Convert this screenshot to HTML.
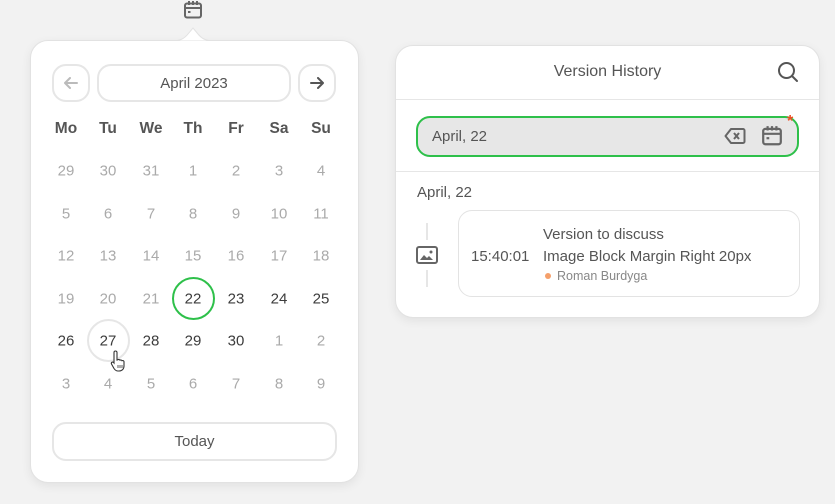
<!DOCTYPE html>
<html><head><meta charset="utf-8"><style>
*{box-sizing:border-box;margin:0;padding:0}
body{width:835px;height:503px;background:#f2f2f2;font-family:"Liberation Sans",sans-serif;color:#444;position:relative;overflow:hidden}
.a{position:absolute}
.panel{background:#fff;border:1px solid #e2e2e2;border-radius:18px;box-shadow:0 3px 10px rgba(0,0,0,.07)}
.btn{background:#fff;border:2px solid #e6e6e6;border-radius:14px;display:flex;align-items:center;justify-content:center;font-size:15px;color:#555}
.c{position:absolute;width:40px;margin-left:-20px;text-align:center;font-size:15px;transform:translateY(-50%);color:#3c3c3c}
.h{font-weight:bold;color:#555;font-size:15.5px}
.g{color:#aaa}
</style></head><body>
<svg class="a" style="left:183px;top:0" width="20" height="20" viewBox="0 0 20 20" fill="none" stroke="#666" stroke-width="2"><rect x="2" y="3.5" width="16" height="14" rx="2"/><path d="M2 8h16M6 1v4M10 1v4M14 1v4"/><rect x="5" y="11" width="2.5" height="2" fill="#666" stroke="none"/></svg>
<div class="a panel" style="left:30px;top:40px;width:329px;height:443px"></div>
<svg class="a" style="left:170px;top:24px" width="46" height="18"><path d="M0 17 C10 17 14 15 18 10 L23 4 L28 10 C32 15 36 17 46 17 Z" fill="#fff" stroke="#e2e2e2"/><rect x="0" y="17" width="46" height="2" fill="#fff"/></svg>
<div class="a btn" style="left:52px;top:64px;width:38px;height:38px"><svg width="14" height="12" viewBox="0 0 14 12" fill="none" stroke="#bbb" stroke-width="2" stroke-linecap="round" stroke-linejoin="round"><path d="M13 6H1M6 1L1 6l5 5"/></svg></div>
<div class="a btn" style="left:97px;top:64px;width:194px;height:38px">April 2023</div>
<div class="a btn" style="left:298px;top:64px;width:38px;height:38px"><svg width="14" height="12" viewBox="0 0 14 12" fill="none" stroke="#555" stroke-width="2" stroke-linecap="round" stroke-linejoin="round"><path d="M1 6h12M8 1l5 5-5 5"/></svg></div>
<div class="a" style="left:0;top:1px;width:835px;height:503px">
<div class="c h" style="left:66px;top:128px">Mo</div><div class="c h" style="left:108px;top:128px">Tu</div><div class="c h" style="left:151px;top:128px">We</div><div class="c h" style="left:193px;top:128px">Th</div><div class="c h" style="left:236px;top:128px">Fr</div><div class="c h" style="left:279px;top:128px">Sa</div><div class="c h" style="left:321px;top:128px">Su</div>
<div class="c g" style="left:66px;top:170px">29</div><div class="c g" style="left:108px;top:170px">30</div><div class="c g" style="left:151px;top:170px">31</div><div class="c g" style="left:193px;top:170px">1</div><div class="c g" style="left:236px;top:170px">2</div><div class="c g" style="left:279px;top:170px">3</div><div class="c g" style="left:321px;top:170px">4</div>
<div class="c g" style="left:66px;top:213px">5</div><div class="c g" style="left:108px;top:213px">6</div><div class="c g" style="left:151px;top:213px">7</div><div class="c g" style="left:193px;top:213px">8</div><div class="c g" style="left:236px;top:213px">9</div><div class="c g" style="left:279px;top:213px">10</div><div class="c g" style="left:321px;top:213px">11</div>
<div class="c g" style="left:66px;top:255px">12</div><div class="c g" style="left:108px;top:255px">13</div><div class="c g" style="left:151px;top:255px">14</div><div class="c g" style="left:193px;top:255px">15</div><div class="c g" style="left:236px;top:255px">16</div><div class="c g" style="left:279px;top:255px">17</div><div class="c g" style="left:321px;top:255px">18</div>
<div class="a" style="left:172px;top:276px;width:43px;height:43px;border:2px solid #2ec04a;border-radius:50%"></div>
<div class="c g" style="left:66px;top:298px">19</div><div class="c g" style="left:108px;top:298px">20</div><div class="c g" style="left:151px;top:298px">21</div><div class="c" style="left:193px;top:298px">22</div><div class="c" style="left:236px;top:298px">23</div><div class="c" style="left:279px;top:298px">24</div><div class="c" style="left:321px;top:298px">25</div>
<div class="a" style="left:87px;top:318px;width:43px;height:43px;border:2px solid #e6e6e6;border-radius:50%"></div>
<div class="c" style="left:66px;top:340px">26</div><div class="c" style="left:108px;top:340px">27</div><div class="c" style="left:151px;top:340px">28</div><div class="c" style="left:193px;top:340px">29</div><div class="c" style="left:236px;top:340px">30</div><div class="c g" style="left:279px;top:340px">1</div><div class="c g" style="left:321px;top:340px">2</div>
<div class="c g" style="left:66px;top:383px">3</div><div class="c g" style="left:108px;top:383px">4</div><div class="c g" style="left:151px;top:383px">5</div><div class="c g" style="left:193px;top:383px">6</div><div class="c g" style="left:236px;top:383px">7</div><div class="c g" style="left:279px;top:383px">8</div><div class="c g" style="left:321px;top:383px">9</div>
</div>
<svg class="a" style="left:110px;top:350px" width="18" height="22" viewBox="0 0 18 22"><path d="M4 2.5a1.5 1.5 0 0 1 3 0V10l1-.3a1.4 1.4 0 0 1 2 .5 1.4 1.4 0 0 1 2 .5 1.4 1.4 0 0 1 2 .8V16c0 3-2 5-5 5H8c-2 0-3-1-4-2.5L1.5 14a1.3 1.3 0 0 1 2-1.6L4 13Z" fill="#fff" stroke="#333" stroke-width="1.1"/><path d="M8 15v3M10 15v3M12 15v3" stroke="#333" stroke-width=".8"/></svg>
<div class="a btn" style="left:52px;top:422px;width:285px;height:39px">Today</div>

<div class="a panel" style="left:395px;top:45px;width:425px;height:273px"></div>
<div class="a" style="left:395px;top:63px;width:425px;text-align:center;font-size:16px;color:#555">Version History</div>
<svg class="a" style="left:777px;top:61px" width="22" height="22" viewBox="0 0 22 22" fill="none" stroke="#555" stroke-width="2"><circle cx="9.5" cy="9.5" r="7.5"/><path d="M15 15l5 5" stroke-linecap="round"/></svg>
<div class="a" style="left:396px;top:99px;width:423px;height:1px;background:#e6e6e6"></div>
<div class="a" style="left:416px;top:116px;width:383px;height:41px;border:2px solid #2ec04a;border-radius:14px;background:#e7e7e7"></div>
<div class="a" style="left:432px;top:128px;font-size:15px;color:#555">April, 22</div>
<svg class="a" style="left:724px;top:127px" width="22" height="18" viewBox="0 0 22 18" fill="none" stroke="#666" stroke-width="2"><path d="M7 2h12a1.5 1.5 0 0 1 1.5 1.5v11A1.5 1.5 0 0 1 19 16H7L1.5 9Z" stroke-linejoin="round"/><path d="M10 6l5 6M15 6l-5 6"/></svg>
<svg class="a" style="left:761px;top:125px" width="22" height="22" viewBox="0 0 20 20" fill="none" stroke="#666" stroke-width="2"><rect x="2" y="3.5" width="16" height="14" rx="2"/><path d="M2 8h16M6 1v4M10 1v4M14 1v4"/><rect x="5" y="11" width="2.5" height="2" fill="#666" stroke="none"/></svg>
<div class="a" style="left:787px;top:113px;color:#f04e23;font-size:16px;font-weight:bold">*</div>
<div class="a" style="left:396px;top:171px;width:423px;height:1px;background:#e6e6e6"></div>
<div class="a" style="left:417px;top:184px;font-size:15px;color:#555">April, 22</div>
<div class="a" style="left:426px;top:223px;width:2px;height:17px;background:#e6e6e6"></div>
<div class="a" style="left:426px;top:270px;width:2px;height:17px;background:#e6e6e6"></div>
<svg class="a" style="left:416px;top:246px" width="22" height="18" viewBox="0 0 22 18" fill="none" stroke="#666" stroke-width="2"><rect x="1" y="1" width="20" height="16" rx="2"/><path d="M4 14l4-5 3 3 2-2 4 4Z" fill="#666" stroke="none"/><circle cx="15" cy="6" r="1.5" fill="#666" stroke="none"/></svg>
<div class="a" style="left:458px;top:210px;width:342px;height:87px;border:1px solid #e3e3e3;border-radius:14px;background:#fff"></div>
<div class="a" style="left:471px;top:248px;font-size:15px;color:#555">15:40:01</div>
<div class="a" style="left:543px;top:226px;font-size:15px;color:#555">Version to discuss</div>
<div class="a" style="left:543px;top:248px;font-size:15px;color:#555">Image Block Margin Right 20px</div>
<div class="a" style="left:545px;top:273px;width:6px;height:6px;border-radius:50%;background:#f5a06b"></div>
<div class="a" style="left:557px;top:269px;font-size:12.5px;color:#888">Roman Burdyga</div>
</body></html>
